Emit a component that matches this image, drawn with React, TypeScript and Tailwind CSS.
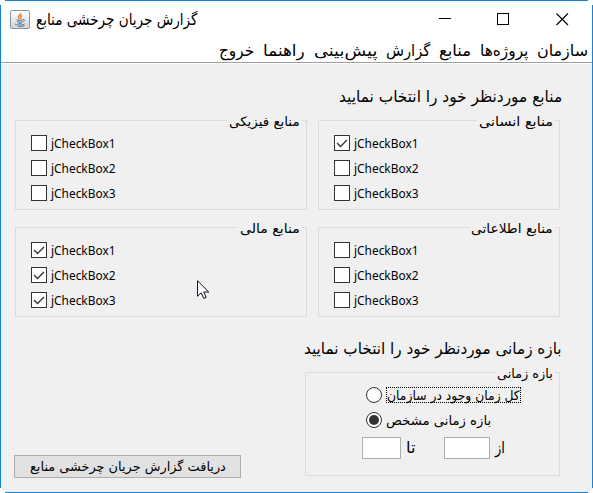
import { useLayoutEffect, useRef, useState } from "react";
import type { ReactNode } from "react";

/* One line of text condensed or widened to fill its box exactly. */
function Fit({ children, className, rtl = true }: { children: ReactNode; className: string; rtl?: boolean }) {
  const ref = useRef<HTMLSpanElement>(null);
  const [scale, setScale] = useState(1);
  useLayoutEffect(() => {
    const el = ref.current;
    if (el && el.parentElement) setScale(el.parentElement.clientWidth / el.offsetWidth);
  }, [children]);
  return (
    <span dir={rtl ? "rtl" : "ltr"} className={"block shrink-0 whitespace-nowrap text-start " + className}>
      <span
        ref={ref}
        className={"inline-block " + (rtl ? "origin-right" : "origin-left")}
        style={{ transform: `scaleX(${scale})` }}
      >
        {children}
      </span>
    </span>
  );
}

function JavaIcon() {
  return (
    <svg width="20" height="19" viewBox="0 0 20 19" fill="none">
      <defs>
        <linearGradient id="tile" x1="0" y1="0" x2="0" y2="1">
          <stop offset="0" stopColor="#ffffff" />
          <stop offset="1" stopColor="#cfd5dc" />
        </linearGradient>
      </defs>
      <rect x="0.5" y="0.5" width="19" height="18" rx="1.5" fill="url(#tile)" stroke="#8797a6" />
      <path d="M10.7 3c1 1.800-3.200 2.600-2.200 4.700.3.700.8 1.100 1 1.700M12 5.300c-2.300 1.200-.5 2.200-1.500 3.700" stroke="#e58236" strokeWidth="1.500" />
      <path d="M6.500 9.700c-1 .8 5.600.8 6.500 0M7.200 11.500c1.300.6 4 .6 5.100 0M7.600 13c1.200.5 3.200.5 4.300 0M13 9.600c2.200-.4 2 1.700-.3 2.400M5.600 13.700c-2.700 1.600 7.800 1.800 8.900.3M8 16.300c2.500.2 5 0 6.500-.8" stroke="#537590" strokeWidth="1" />
    </svg>
  );
}

function WindowControls() {
  return (
    <div className="flex items-center gap-[45px]">
      <svg width="13" height="13" viewBox="0 0 13 13" shapeRendering="crispEdges">
        <path d="M0 5.500H12" stroke="#000" />
      </svg>
      <svg width="13" height="13" viewBox="0 0 13 13" shapeRendering="crispEdges">
        <rect x="0.500" y="0.500" width="11" height="11" fill="none" stroke="#000" />
      </svg>
      <svg className="ml-px" width="13" height="13" viewBox="0 0 13 13">
        <path d="M0.500 0.500L12 12M12 0.500L0.500 12" stroke="#000" strokeWidth="1.100" />
      </svg>
    </div>
  );
}

function CheckRow({ label, checked }: { label: string; checked: boolean }) {
  return (
    <div className="flex h-4 items-center gap-1">
      <span className="flex size-4 items-center justify-center border border-[#333] bg-white">
        {checked && (
          <svg width="14" height="14" viewBox="0 0 14 14" fill="none">
            <path d="M2 7L5.500 10.500L12 4" stroke="#333" strokeWidth="1.400" />
          </svg>
        )}
      </span>
      <Fit rtl={false} className="w-[65px] pb-px font-['Noto_Sans',sans-serif] text-[13px] leading-4">{label}</Fit>
    </div>
  );
}

function Group({ title, titleWidth, className, children }: { title: string; titleWidth: string; className: string; children: ReactNode }) {
  return (
    <section className={"relative shrink-0 border border-[#dcdcdc] " + className}>
      <div className="absolute right-[4px] top-[-9px] bg-[#f0f0f0] px-[2px] pt-px">
        <Fit className={"text-[13px] leading-[18px] " + titleWidth}>{title}</Fit>
      </div>
      {children}
    </section>
  );
}

function CheckGroup({ title, titleWidth, width, checks }: { title: string; titleWidth: string; width: string; checks: boolean[] }) {
  return (
    <Group title={title} titleWidth={titleWidth} className={"flex h-[90px] flex-col gap-[9px] pl-[15px] pt-[14px] " + width}>
      {checks.map((checked, i) => (
        <CheckRow key={i} label={`jCheckBox${i + 1}`} checked={checked} />
      ))}
    </Group>
  );
}

const menu = [
  { label: "خروج", width: "w-[35px]" },
  { label: "راهنما", width: "w-[42px]" },
  { label: "پیش‌بینی", width: "w-[63px]" },
  { label: "گزارش", width: "w-[44px]" },
  { label: "منابع", width: "w-[32px]" },
  { label: "پروژه‌ها", width: "w-[48px]" },
  { label: "سازمان", width: "w-[51px]" },
];

export default function App() {
  return (
    <div className="relative flex h-[493px] w-[593px] flex-col overflow-hidden bg-[#f0f0f0] font-['DejaVu_Sans_Condensed','DejaVu_Sans',sans-serif] text-black">
      <header className="flex h-[64px] shrink-0 flex-col border-b border-white bg-white">
        <div className="flex h-[38px] items-center justify-between pl-[10px] pr-[24px]">
          <div className="flex items-center gap-[6px]">
            <JavaIcon />
            <Fit className="w-[162px] pt-px text-[16px] leading-6">گزارش جریان چرخشی منابع</Fit>
          </div>
          <WindowControls />
        </div>
        <nav className="flex h-[25px] items-center justify-end gap-[9px] border-b border-[#a0a0a0] pr-[5px]">
          {menu.map((m) => (
            <Fit key={m.label} className={"pt-[2px] text-[16px] leading-6 " + m.width}>{m.label}</Fit>
          ))}
        </nav>
      </header>

      <main className="flex flex-1 flex-col pl-[15px]">
        <div className="flex justify-end pr-[31px] pt-[21px]">
          <Fit className="w-[223px] text-[16px] leading-6">منابع موردنظر خود را انتخاب نمایید</Fit>
        </div>
        <div className="mt-[11px] flex gap-[11px]">
          <CheckGroup title="منابع فیزیکی" titleWidth="w-[71px]" width="w-[292px]" checks={[false, false, false]} />
          <CheckGroup title="منابع انسانی" titleWidth="w-[74px]" width="w-[242px]" checks={[true, false, false]} />
        </div>
        <div className="mt-[17px] flex gap-[11px]">
          <CheckGroup title="منابع مالی" titleWidth="w-[60px]" width="w-[292px]" checks={[true, true, true]} />
          <CheckGroup title="منابع اطلاعاتی" titleWidth="w-[82px]" width="w-[242px]" checks={[false, false, false]} />
        </div>
        <div className="mt-[20px] flex justify-end pr-[31px]">
          <Fit className="w-[258px] text-[16px] leading-6">بازه زمانی موردنظر خود را انتخاب نمایید</Fit>
        </div>
        <div className="mt-[11px] flex items-start justify-between pr-[33px]">
          <button className="-ml-px mt-[83px] flex h-[23px] w-[227px] justify-center border border-[#adadad] bg-[#e1e1e1]">
            <Fit className="w-[196px] text-[13px] leading-[22px]">دریافت گزارش جریان چرخشی منابع</Fit>
          </button>
          <Group title="بازه زمانی" titleWidth="w-[56px]" className="flex h-[104px] w-[255px] flex-col pl-[56px] pt-[14px]">
            <div className="flex h-4 items-center gap-1 pl-1">
              <span className="size-4 rounded-full border border-[#333] bg-white" />
              <span className="flex h-4 w-[135px] items-center border border-dotted border-black">
                <Fit className="w-[133px] pt-px text-[13px] leading-[16px]">کل زمان وجود در سازمان</Fit>
              </span>
            </div>
            <div className="mt-[9px] flex h-4 items-center gap-1 pl-1">
              <span className="flex size-4 items-center justify-center rounded-full border border-[#333] bg-white">
                <span className="size-[10px] rounded-full bg-[#333]" />
              </span>
              <Fit className="w-[105px] pt-px text-[13px] leading-4">بازه زمانی مشخص</Fit>
            </div>
            <div className="mt-[9px] flex h-[22px] items-center">
              <span className="h-[22px] w-[39px] border border-[#abadb3] bg-white" />
              <Fit className="ml-[5px] w-[9px] text-[16px] leading-6">تا</Fit>
              <span className="ml-[29px] h-[22px] w-[46px] border border-[#abadb3] bg-white" />
              <Fit className="ml-[5px] w-[10px] text-[16px] leading-6">از</Fit>
            </div>
          </Group>
        </div>
      </main>

      {/* window frame, open at its four cut corners */}
      <svg className="pointer-events-none absolute inset-0" width="593" height="493" viewBox="0 0 593 493" shapeRendering="crispEdges">
        <path d="M0 488L5 493H0ZM593 488L588 493H593Z" fill="#fff" />
        <path d="M0 5H1V488H0ZM592 5H593V488H592ZM5 0H588V1H5ZM5 492H588V493H5Z" fill="#1883d7" />
      </svg>

      {/* mouse pointer */}
      <svg className="absolute left-[197px] top-[280px]" width="13" height="20" viewBox="0 0 13 20">
        <path d="M0.500 0.800V16.300L4.200 12.800L6.800 18.500L9.200 17.400L6.700 12H11.800Z" fill="#fff" stroke="#111122" strokeWidth="1" />
      </svg>
    </div>
  );
}
